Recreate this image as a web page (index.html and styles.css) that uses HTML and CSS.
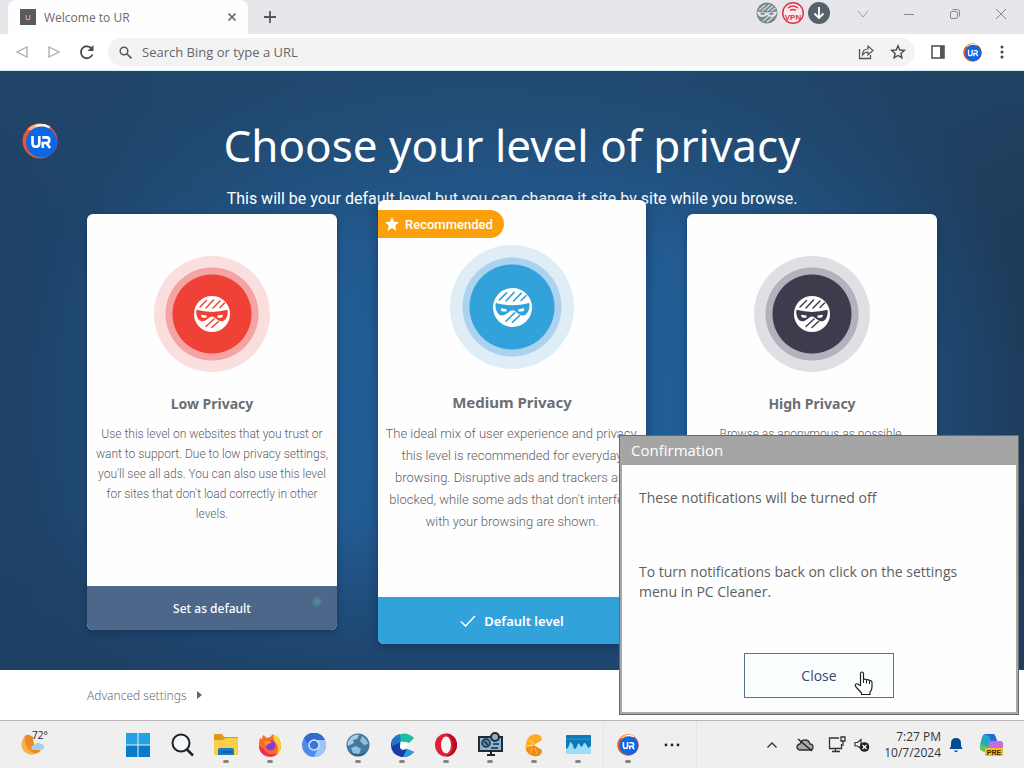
FILE: index.html
```html
<!DOCTYPE html>
<html lang="en">
<head>
<meta charset="utf-8">
<title>Welcome to UR</title>
<link rel="stylesheet" href="styles.css">
</head>
<body>
<svg class="defs" aria-hidden="true">
  <symbol id="ninja" viewBox="0 0 36 36">
    <circle cx="18" cy="18" r="18" fill="#fff"/>
    <path fill="currentColor" d="M2.500 13.800Q18 18 33.500 13.800C34.500 19 32 24.800 28.500 25.300C24 26 21 20.500 18 20.500S12 26 7.500 25.300C4 24.800 1.500 19 2.500 13.800Z"/>
    <path fill="#fff" d="M7 18.800l5.500.8v2.200H8.800Q7.200 21.500 7 18.800ZM29 18.800l-5.500.8v2.200h3.700Q28.800 21.500 29 18.800Z"/>
    <path stroke="currentColor" stroke-width="1.500" stroke-linecap="round" fill="none" d="M6 11 12.500 4.500M12 12 19.500 4M19 12 26 5M26 11.500 30.500 7M12 30.500 20 23M18 31.500 24.500 25.500"/>
  </symbol>
  <symbol id="ur" viewBox="0 0 36 36">
    <circle cx="18" cy="18" r="17.500" fill="#e8562e"/>
    <path d="M5 7A17.500 17.500 0 0 1 28 3.500L25 8Z" fill="#ffb37a"/>
    <path d="M14 2Q22-.5 28 3.500L26 7Q20 3 14 4Z" fill="#fff3e2"/>
    <circle cx="19.500" cy="19" r="15.500" fill="#0d66e4"/>
    <path d="M10.500 13v7.200q0 3.600 3.400 3.600t3.400-3.600V13M20.800 25v-5h3.700q2.800 0 2.800-2.800t-2.800-2.800h-4.200M24.500 20l3.600 5" fill="none" stroke="#fff" stroke-width="2.600"/>
  </symbol>
</svg>

<header class="tabs">
  <div class="tab">
    <span class="favicon">U</span>
    <span class="tab-title">Welcome to UR</span>
    <button class="icon" aria-label="Close tab"><svg width="10" height="10" viewBox="0 0 10 10"><path d="M1.500 1.500l7 7M8.500 1.500l-7 7" stroke="#666" stroke-width="1.700"/></svg></button>
  </div>
  <button class="icon new-tab" aria-label="New tab"><svg width="14" height="14" viewBox="0 0 14 14"><path d="M7 1v12M1 7h12" stroke="#555" stroke-width="1.800"/></svg></button>
  <div class="extensions">
    <button class="icon" aria-label="Privacy"><svg width="22" height="22" viewBox="0 0 22 22"><circle cx="11" cy="11" r="10.500" fill="#7b878e"/><path d="M3 8l6-5M6 9l8-6.500M11 9l6-5M15.500 9l4-3M7 19l6-5M11 20l6-5" stroke="#d8dfe3" stroke-width="1.200"/><path d="M1 9.500q10 2 20 0-1 5.500-5 5.500-3 0-5-2-2 2-5 2-4 0-5-5.500Z" fill="#e1e6e9"/><path d="M4.500 11.500l4 .8M17.500 11.500l-4 .8" stroke="#6b777e" stroke-width="1.500"/></svg></button>
    <button class="icon" aria-label="VPN"><svg width="22" height="22" viewBox="0 0 22 22"><circle cx="11" cy="11" r="10.300" fill="#fbe9ea" stroke="#d93443" stroke-width="1.400"/><path d="M6 6q5-4 10 0M8 8.500q3-2 6 0" stroke="#d93443" fill="none" stroke-width="1.300"/><text x="11" y="17.500" text-anchor="middle" class="vpn">VPN</text></svg></button>
    <button class="icon" aria-label="Downloads"><svg width="22" height="22" viewBox="0 0 22 22"><circle cx="11" cy="11" r="11" fill="#56626a"/><path d="M11 5v11M6.500 11.500 11 16l4.500-4.500" stroke="#fff" stroke-width="1.800" fill="none"/></svg></button>
  </div>
  <div class="window-controls">
    <button class="icon" aria-label="Search tabs"><svg width="12" height="10" viewBox="0 0 12 10"><path d="M1 2l5 6 5-6" stroke="#9b9b9e" fill="none"/></svg></button>
    <button class="icon" aria-label="Minimize"><svg width="12" height="10" viewBox="0 0 12 10"><path d="M1 5.500h10" stroke="#888"/></svg></button>
    <button class="icon" aria-label="Restore"><svg width="12" height="12" viewBox="0 0 12 12"><rect x="1.500" y="3.500" width="7" height="7" rx="1.500" stroke="#888" fill="none"/><path d="M3.500 1.500h5q2 0 2 2v5" stroke="#888" fill="none"/></svg></button>
    <button class="icon" aria-label="Close"><svg width="12" height="12" viewBox="0 0 12 12"><path d="M1 1l10 10M11 1 1 11" stroke="#888"/></svg></button>
  </div>
</header>

<div class="toolbar">
  <button class="icon nav" aria-label="Back"><svg width="14" height="14" viewBox="0 0 14 14"><path d="M12 2v10L2 7Z" fill="none" stroke="#aaa" stroke-width="1.300"/></svg></button>
  <button class="icon nav" aria-label="Forward"><svg width="14" height="14" viewBox="0 0 14 14"><path d="M2 2v10l10-5Z" fill="none" stroke="#aaa" stroke-width="1.300"/></svg></button>
  <button class="icon nav" aria-label="Reload"><svg width="16" height="16" viewBox="0 0 16 16"><path d="M13 5A6 6 0 1 0 13.500 10.500" fill="none" stroke="#4b4b4d" stroke-width="1.800"/><path d="M14.500 1v6h-6Z" fill="#4b4b4d"/></svg></button>
  <div class="omnibox">
    <svg width="13" height="13" viewBox="0 0 13 13"><circle cx="5" cy="5" r="3.800" fill="none" stroke="#555" stroke-width="1.500"/><path d="M8 8l4.500 4.500" stroke="#555" stroke-width="1.600"/></svg>
    <input type="text" aria-label="Address" placeholder="Search Bing or type a URL">
    <button class="icon" aria-label="Share"><svg width="16" height="16" viewBox="0 0 16 16"><path d="M1.500 5v9.500h11V11" fill="none" stroke="#555" stroke-width="1.300"/><path d="M4.500 11q0-6 5.500-6V2l5 4.500-5 4.500V8Q6.500 8 4.500 11Z" fill="none" stroke="#555" stroke-width="1.200"/></svg></button>
    <button class="icon" aria-label="Bookmark"><svg width="16" height="16" viewBox="0 0 16 16"><path d="M8 1.800l1.800 4.200 4.500.4-3.400 3 1 4.500L8 11.500 4.100 13.900l1-4.500-3.400-3 4.500-.4Z" fill="none" stroke="#4b4b4d" stroke-width="1.400"/></svg></button>
  </div>
  <button class="icon" aria-label="Side panel"><svg width="14" height="14" viewBox="0 0 14 14"><rect x="1" y="1" width="12" height="12" fill="none" stroke="#555" stroke-width="1.600"/><path d="M9 1h4v12H9Z" fill="#555"/></svg></button>
  <button class="icon" aria-label="Profile"><svg width="19" height="19"><use href="#ur"/></svg></button>
  <button class="icon" aria-label="Menu"><svg width="4" height="14" viewBox="0 0 4 14"><g fill="#444"><circle cx="2" cy="2" r="1.500"/><circle cx="2" cy="7" r="1.500"/><circle cx="2" cy="12" r="1.500"/></g></svg></button>
</div>

<main class="hero">
  <div class="hero-head">
    <svg class="logo" width="36" height="36"><use href="#ur"/></svg>
    <div class="titles">
      <h1>Choose your level of privacy</h1>
      <p>This will be your default level but you can change it site by site while you browse.</p>
    </div>
  </div>
  <div class="cards">
    <article class="card">
      <div class="badge red"><svg width="36" height="36"><use href="#ninja"/></svg></div>
      <h2>Low Privacy</h2>
      <p>Use this level on websites that you trust or want to support. Due to low privacy settings, you'll see all ads. You can also use this level for sites that don't load correctly in other levels.</p>
      <button class="choose glint">Set as default</button>
    </article>
    <article class="card featured">
      <span class="ribbon"><svg width="14" height="14" viewBox="0 0 14 14"><path d="M7 0l2 4.800 5 .4-3.800 3.400L11.400 14 7 11l-4.400 3 1.200-5.400L0 5.200l5-.4Z" fill="#fff"/></svg>Recommended</span>
      <div class="badge blue"><svg width="39" height="39"><use href="#ninja"/></svg></div>
      <h2>Medium Privacy</h2>
      <p>The ideal mix of user experience and privacy, this level is recommended for everyday browsing. Disruptive ads and trackers are blocked, while some ads that don't interfere with your browsing are shown.</p>
      <button class="choose"><svg width="16" height="12" viewBox="0 0 16 12"><path d="M1 6.500l4.500 4.500L15 1" fill="none" stroke="#fff" stroke-width="1.500"/></svg>Default level</button>
    </article>
    <article class="card">
      <div class="badge dark"><svg width="36" height="36"><use href="#ninja"/></svg></div>
      <h2>High Privacy</h2>
      <p>Browse as anonymous as possible.</p>
      <button class="choose">Set as default</button>
    </article>
  </div>
</main>

<footer class="advanced"><a href="#">Advanced settings <svg width="5" height="8" viewBox="0 0 5 8"><path d="M0 0l5 4-5 4Z" fill="#666"/></svg></a></footer>

<section class="dialog" role="dialog" aria-labelledby="dialog-title">
  <h3 id="dialog-title">Confirmation</h3>
  <div class="dialog-body">
    <p>These notifications will be turned off</p>
    <p>To turn notifications back on click on the settings menu in PC Cleaner.</p>
    <button>Close</button>
  </div>
</section>
<svg class="cursor" width="20" height="25" viewBox="0 0 20 25"><path d="M6.500 14.500V2.500q0-1.500 1.500-1.500t1.500 1.500v6q2-1 3 .5 2-.8 3 .8 2.500-.5 2.500 2V16q0 3-2 5v2.500H7.500V22L2 16q-1.500-2 0-3 1.500-.8 3 1Z" fill="#fff" stroke="#222" stroke-width="1.200" stroke-linejoin="round"/><path d="M9.500 8.500V12M12.500 9v3.500M15.500 10v3" stroke="#222"/></svg>

<nav class="taskbar" aria-label="Taskbar">
  <button class="weather" aria-label="Weather"><svg width="24" height="22" viewBox="0 0 24 22"><path d="M5 1A10.500 10.500 0 1 0 20 17Q12 15 12 3Q8 0 5 1Z" fill="#ee8a22"/><path d="M4 3A10 10 0 0 0 14 20Q3 15 4 3Z" fill="#f7b04c"/><path d="M12 16q-3-1-1-4 1-1 3-1 2-4 6-1 3 0 3 3 0 3-3 3Z" fill="#a9cdec"/></svg><span>72°</span></button>
  <div class="apps">
    <button aria-label="Start"><svg width="24" height="24" viewBox="0 0 24 24"><path d="M0 0h11.500v11.500H0ZM12.500 0H24v11.500H12.500Z" fill="#22a3e3"/><path d="M0 12.500h11.500V24H0ZM12.500 12.500H24V24H12.500Z" fill="#087cc8"/></svg></button>
    <button aria-label="Search"><svg width="24" height="24" viewBox="0 0 24 24"><circle cx="11" cy="10" r="8.500" fill="#f5f8fa" stroke="#222" stroke-width="2"/><path d="M17 16.500l6 6" stroke="#222" stroke-width="2.500"/></svg></button>
    <button class="open" aria-label="File Explorer"><svg width="26" height="24" viewBox="0 0 26 24"><path d="M1 2q0-1 1-1h7l2 3h13q1 0 1 1v5H1Z" fill="#d99a18"/><path d="M1 7h9l3-2h11q1 0 1 1v15q0 1-1 1H2q-1 0-1-1Z" fill="#fbcf45"/><path d="M5 22v-5q0-2 2-2h12q2 0 2 2v5Z" fill="#1878c4"/><path d="M8 19h10" stroke="#0c5a9c" stroke-width="1.500"/></svg></button>
    <button class="open" aria-label="Firefox"><svg width="24" height="24" viewBox="0 0 24 24"><path d="M2 5l2 1 1-4 4 3q4-1 6-4 2 1 3 4l2-1q3 4 3 9a11 11 0 0 1-22 0Q1 8 2 5Z" fill="#fb6a24"/><path d="M15 1q7 3 8 11 0 7-5 10 4-6 0-12-3-3-3-9Z" fill="#ffd138"/><path d="M1 13a11 11 0 0 0 19 7q-10 4-14-4Z" fill="#ed2b5b"/><circle cx="12.500" cy="12.500" r="5" fill="#843ad9"/><path d="M6 9q5-3 8 1-5 0-6 4Z" fill="#ff982d"/></svg></button>
    <button aria-label="Chromium"><svg width="24" height="24" viewBox="0 0 24 24"><circle cx="12" cy="12" r="12" fill="#4d8ce9"/><path d="M12 7h11A12 12 0 0 1 12 24l4-9Z" fill="#9fc5f7"/><path d="M2 5A12 12 0 0 1 23 7H12q-4 1-5 6Z" fill="#2e6bd0"/><circle cx="12" cy="12" r="5.800" fill="#d5e6ff"/><circle cx="12" cy="12" r="4.300" fill="#3975d7"/></svg></button>
    <button class="open" aria-label="Globe browser"><svg width="24" height="24" viewBox="0 0 24 24"><circle cx="12" cy="12" r="11.500" fill="#4478a0"/><path d="M3 7q4-6 10-5l-2 4-4 1 1 3-4 2-2 1Q1 9 3 7Z" fill="#a5cfe3"/><path d="M16 3q5 3 6 8l-4 1-4-4ZM5 15l5-2 5 3-2 5-6-1Z" fill="#8fc0db"/><path d="M4 19q8 5 16 0-3 4-8 4t-8-4Z" fill="#2b5779"/></svg></button>
    <button class="open" aria-label="C browser"><svg width="25" height="24" viewBox="0 0 25 24"><path d="M24 5Q18-1 11 1 1 4 1 13l8 2 2-4q3-4 8-1Z" fill="#19bfa5"/><path d="M1 10l9-1v6q2 3 7 1l7 3q-6 6-13 5Q0 21 1 10Z" fill="#193da6"/><path d="M1 9q2-6 9-8l1 8-9 4Z" fill="#1c79c9"/><path d="M17 16l7 3q-5 5-11 5Z" fill="#299ee0"/><path d="M11 8l7 4-6 5q-3-4-1-9Z" fill="#fff"/></svg></button>
    <button class="open" aria-label="Opera"><svg width="24" height="24" viewBox="0 0 24 24"><ellipse cx="12" cy="12" rx="11" ry="11.500" fill="#e01f36"/><path d="M12 .5a11 11.500 0 0 1 0 23Q20 20 19 12T12 .5Z" fill="#b10e25"/><ellipse cx="12" cy="12" rx="5" ry="8.500" fill="#f5f5f5"/></svg></button>
    <button class="open" aria-label="PC Cleaner"><svg width="25" height="25" viewBox="0 0 25 25"><rect x="1" y="5" width="23" height="14" fill="#86b5d9" stroke="#222b33" stroke-width="2"/><path d="M9 23h8M13 19v4" stroke="#222" stroke-width="2"/><circle cx="8" cy="11" r="4" fill="#5b88aa" stroke="#222b33" stroke-width="1.500"/><circle cx="17" cy="5" r="4" fill="#9ab" stroke="#222b33" stroke-width="2"/><path d="M6 9l4 4M15 12h6M13 16h7" stroke="#222b33" stroke-width="1.500"/></svg></button>
    <button class="open" aria-label="Shell app"><svg width="20" height="24" viewBox="0 0 20 24"><path d="M17 3Q13 0 8 2 3 4 2 11q-2 8 5 11 6 3 10-1l1-4-8-5 8-5Z" fill="#faad22"/><path d="M5 7l5 4M2 13l7-1" stroke="#ffdf8a" stroke-width="1"/><path d="M2 15q1 7 8 8 4 1 7-2l1-4-8-4Z" fill="#f08a18"/><path d="M8 15l-2 6M11 15l2 6" stroke="#ffc04a" stroke-width="1"/></svg></button>
    <button class="open" aria-label="System monitor"><svg width="25" height="19" viewBox="0 0 25 19"><rect width="25" height="19" rx="1" fill="#0d79b8"/><path d="M0 14q3-1 4-7 3 1 4 7 3 0 4-6 2 1 3 4 2-1 3-4 2 0 4 5l3-2v8H0Z" fill="#9edcf6"/><path d="M0 4h25" stroke="#2d9bd3"/></svg></button>
  </div>
  <div class="apps pinned">
    <button class="open" aria-label="UR Browser"><svg width="22" height="22"><use href="#ur"/></svg></button>
    <button aria-label="More"><svg width="16" height="4" viewBox="0 0 16 4"><g fill="#222"><circle cx="2" cy="2" r="1.400"/><circle cx="8" cy="2" r="1.400"/><circle cx="14" cy="2" r="1.400"/></g></svg></button>
  </div>
  <div class="tray">
    <button aria-label="Hidden icons"><svg width="12" height="8" viewBox="0 0 12 8"><path d="M1.500 6.500 6 2l4.500 4.500" fill="none" stroke="#333" stroke-width="1.400"/></svg></button>
    <button aria-label="Cloud"><svg width="18" height="14" viewBox="0 0 18 14"><path d="M4 12q-3-.5-3-3t3-3q1-4 5-4t5 4q3 0 3 3t-3 3Z" fill="#aaa" stroke="#333" stroke-width="1.300"/><path d="M2 1l14 12" stroke="#222" stroke-width="1.400"/></svg></button>
    <button aria-label="Network"><svg width="18" height="17" viewBox="0 0 18 17"><path d="M11 2H1.500v10.500h12V8M4 15.500h8M7.500 12.500v3" fill="none" stroke="#333" stroke-width="1.300"/><path d="M13 1h4v4h-4ZM15 5v5" fill="none" stroke="#333" stroke-width="1.300"/></svg></button>
    <button aria-label="Volume muted"><svg width="16" height="16" viewBox="0 0 16 16"><path d="M1 5.500h2.500L7 2.500v9L3.500 9H1Z" fill="none" stroke="#333" stroke-width="1.200"/><circle cx="10.500" cy="10" r="4.800" fill="#222"/><path d="M8.500 8l4 4M12.500 8l-4 4" stroke="#fff" stroke-width="1.200"/></svg></button>
    <time datetime="2024-10-07T19:27">7:27 PM<br>10/7/2024</time>
    <button aria-label="Notifications"><svg width="14" height="16" viewBox="0 0 14 16"><path d="M7 1q5 0 5 5.500V9l1.500 3H.5L2 9V6.500Q2 1 7 1Z" fill="#064b96"/><path d="M5 13.500h4q-.5 1.500-2 1.500t-2-1.500Z" fill="#064b96"/></svg></button>
    <button class="copilot" aria-label="Copilot"><svg width="26" height="24" viewBox="0 0 26 24"><path d="M6 1h8q2 0 3 4l1 3h-6l-4 9H4q-4 0-3-5L3 4q1-3 3-3Z" fill="#25a6c5"/><path d="M5 1h9q2 0 3 4l1 3h-6l-2-5Z" fill="#2469d7"/><path d="M11 8h10q4 0 3 5l-2 6h-9l-3 3H7Z" fill="#c86be0"/><path d="M1 11l7 2-1 6q-4 0-6-3Z" fill="#65bf5e"/><rect x="6" y="15" width="18" height="8" rx="1" fill="#ffb820"/><text x="15" y="21.500" text-anchor="middle" class="pre">PRE</text></svg></button>
  </div>
</nav>
</body>
</html>
```
FILE: styles.css
```css
* { box-sizing: border-box; }
body {
  margin: 0;
  min-height: 100vh;
  display: flex;
  flex-direction: column;
  font-family: "Open Sans", "Noto Sans", sans-serif;
  background: #fff;
  position: relative;
}
h1, h2, h3, p { margin: 0; font-weight: 400; }
button { font: inherit; border: 0; background: none; padding: 0; color: inherit; }
svg { display: block; flex: none; }
.defs { position: absolute; width: 0; height: 0; }
.icon { display: grid; place-items: center; }

.tabs { height: 34px; display: flex; background: #e7e7eb; }
.tab {
  width: 240px;
  margin-left: 8px;
  padding: 0 11px 0 12px;
  display: flex;
  align-items: center;
  gap: 8px;
  background: #fefefe;
  border-radius: 8px 8px 0 0;
}
.favicon {
  width: 16px;
  height: 16px;
  background: #5a5a5c;
  color: #ddd;
  font-size: 8px;
  line-height: 16px;
  text-align: center;
}
.tab-title { flex: 1; font-size: 12px; color: #6a6a6d; }
.new-tab { padding: 0 15px; }
.extensions { margin-left: auto; display: flex; gap: 4px; padding-bottom: 8px; }
.vpn { font: 700 8px "Liberation Sans", sans-serif; fill: #d93443; }
.window-controls { display: flex; gap: 34px; padding: 0 17px 6px 27px; }

.toolbar {
  height: 37px;
  padding: 0 20px 0 15px;
  display: flex;
  align-items: center;
  gap: 18px;
  border-bottom: 1px solid #d5eef7;
}
.nav { width: 14px; }
.omnibox {
  flex: 1;
  height: 28px;
  padding: 0 9px 0 11px;
  display: flex;
  align-items: center;
  gap: 16px;
  border-radius: 14px;
  background: #f3f3f4;
  margin: 0 -2px 0 -3px;
}
.omnibox input {
  flex: 1;
  min-width: 0;
  border: 0;
  padding: 0;
  margin-left: -6px;
  background: none;
  font: 13px "Open Sans", sans-serif;
}
.omnibox input::placeholder { color: #66666a; opacity: 1; }

.hero {
  flex: 1;
  padding: 44px 22px 25px;
  background:
    linear-gradient(180deg, rgba(34, 70, 104, .7) 0%, rgba(34, 70, 104, 0) 30%, rgba(34, 70, 104, 0) 75%, rgba(30, 62, 98, .7) 100%),
    radial-gradient(ellipse 50% 75% at 52% 56%, #22629d 0%, #225b92 45%, rgba(33, 83, 132, 0) 100%),
    linear-gradient(90deg, #1e4268 0%, #204f7b 45%, #1d3a58 100%);
}
.hero-head { display: grid; grid-template-columns: 36px 1fr 36px; }
.logo { margin-top: 8px; }
.titles { text-align: center; color: #fff; }
h1 { font: 400 44px/60px "Noto Sans", sans-serif; }
.titles p { font: 400 16px/20px Roboto, sans-serif; margin-top: 14px; }
.cards {
  display: flex;
  justify-content: center;
  align-items: center;
  gap: 41px;
  margin-top: -9px;
  position: relative;
}
.card {
  width: 250px;
  height: 416px;
  padding-top: 42px;
  display: flex;
  flex-direction: column;
  align-items: center;
  text-align: center;
  background: #fefefe;
  border-radius: 6px;
  overflow: hidden;
  box-shadow: 0 2px 6px rgba(10, 30, 60, .4);
}
.badge {
  width: 116px;
  height: 116px;
  display: grid;
  place-items: center;
  border-radius: 50%;
}
.red { color: #ef4136; background: radial-gradient(circle, #ef4136 39px, #f4a5a3 40px 46px, #fbdfdf 47px); }
.blue { color: #32a2da; background: radial-gradient(circle, #32a2da 42px, #abd2ee 43px 49px, #deedf6 50px); }
.dark { color: #3f3b4c; background: radial-gradient(circle, #3f3b4c 39px, #b3b1bb 40px 46px, #e0e0e4 47px); }
.card h2 { margin-top: 22px; font: 700 14px/20px "Noto Sans", sans-serif; color: #6b6e74; }
.card p { margin: 10px 8px 0; font: 300 12px/20px Roboto, sans-serif; color: #5e6165; }
.choose {
  width: 100%;
  height: 44px;
  margin-top: auto;
  display: flex;
  align-items: center;
  justify-content: center;
  gap: 8px;
  background: #4c678a;
  color: #fff;
  font: 500 12px "Noto Sans", sans-serif;
}
.glint { background: radial-gradient(circle at 92% 36%, #4f8f9c 0, #4f7f94 3px, #4c678a 6px); }
.card.featured {
  width: 268px;
  height: 444px;
  padding-top: 10px;
  box-shadow: 0 3px 12px rgba(10, 30, 60, .5);
}
.ribbon {
  align-self: flex-start;
  height: 28px;
  padding: 0 11px 0 7px;
  display: flex;
  align-items: center;
  gap: 6px;
  border-radius: 0 14px 14px 0;
  background: #fb9f0b;
  color: #fff;
  font: 500 13px Roboto, sans-serif;
}
.featured .badge { width: 124px; height: 124px; margin-top: 7px; }
.featured h2 { font-size: 15px; margin-top: 23px; }
.featured p { font-size: 13px; line-height: 22px; margin: 11px 3px 0; }
.featured .choose { height: 47px; background: #32a2da; font-size: 13px; font-weight: 600; }

.advanced {
  height: 50px;
  padding: 0 87px;
  display: flex;
  align-items: center;
}
.advanced a {
  display: flex;
  align-items: center;
  gap: 10px;
  color: #6c6e72;
  text-decoration: none;
  font: 300 12px "Noto Sans", sans-serif;
}

.dialog {
  position: absolute;
  right: 5px;
  bottom: 53px;
  width: 400px;
  border: 1px solid #68696b;
  box-shadow: inset 0 0 0 2px #a7a7a7;
  background: #fefefe;
  color: #5c5e62;
}
.dialog h3 { padding: 0 11px; font-size: 15px; line-height: 29px; color: #fff; background: #a5a5a5; }
.dialog-body { padding: 23px 19px 16px; font-size: 14px; line-height: 20px; display: flex; flex-direction: column; }
.dialog-body p { max-width: 340px; }
.dialog-body p + p { margin: 54px 0 51px; }
.dialog-body button {
  width: 150px;
  height: 45px;
  align-self: center;
  border: 1px solid #56748c;
  color: #354a66;
  background: #fbfeff;
}
.cursor { position: absolute; right: 150px; bottom: 72px; }

.taskbar {
  height: 48px;
  padding: 0 19px 0 21px;
  display: flex;
  background: #efefef;
  border-top: 1px solid #b9b9b9;
}
.taskbar button { display: grid; place-items: center; }
.taskbar .weather { position: relative; width: 28px; justify-items: start; }
.weather span { position: absolute; left: 11px; top: 7px; font-size: 10px; line-height: 14px; color: #222; }
.apps { display: flex; }
.weather + .apps { margin-left: 67px; }
.apps button { width: 44px; position: relative; }
.open::after {
  content: "";
  position: absolute;
  left: 19px;
  bottom: 5px;
  width: 6px;
  height: 3px;
  border-radius: 2px;
  background: #858585;
}
.pinned { margin-left: 3px; padding: 0 2px; border: solid #e3e3e3; border-width: 0 1px; }
.tray { margin-left: auto; display: flex; align-items: center; gap: 8px; color: #333; }
.tray button:first-child { margin-right: 10px; }
.tray button:nth-child(2) { margin-right: 6px; }
.tray time { margin-left: 6px; font-size: 11px; line-height: 16px; text-align: right; }
.tray time { font-size: 12px; }
.copilot { margin-left: 8px; }
.pre { font: 700 7px "Liberation Sans", sans-serif; fill: #3b2a00; }
```
